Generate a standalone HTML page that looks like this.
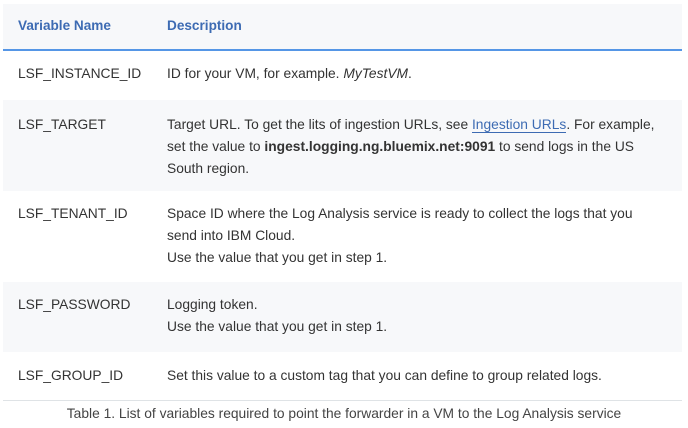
<!DOCTYPE html>
<html><head><style>
body{margin:0;width:688px;height:428px;background:#fff;font-family:"Liberation Sans",sans-serif;font-size:13.8px;color:#333;position:relative;overflow:hidden}
.bg{position:absolute;left:3px;width:679px}
.t{position:absolute;white-space:nowrap;line-height:22px}
.h{color:#3d6bb3;font-weight:bold;font-size:13.6px}
a{color:#3d6bb3;text-decoration:none;border-bottom:1px solid #3d6bb3}
</style></head><body>
<div class="bg" style="top:4px;height:45px;background:#f7f8fa"></div>
<div class="bg" style="top:49px;height:2px;background:#5596e6"></div>
<div class="bg" style="top:100px;height:91px;background:#f7f8fa"></div>
<div class="bg" style="top:282px;height:70px;background:#f7f8fa"></div>
<div class="bg" style="top:400px;height:1px;background:#dfe3e6"></div>

<div class="t h" style="left:18px;top:15px">Variable Name</div>
<div class="t h" style="left:167px;top:15px">Description</div>

<div class="t" style="left:18px;top:63px">LSF_INSTANCE_ID</div>
<div class="t" style="left:167px;top:63px">ID for your VM, for example. <i>MyTestVM</i>.</div>

<div class="t" style="left:18px;top:114px">LSF_TARGET</div>
<div class="t" style="left:167px;top:114px">Target URL. To get the lits of ingestion URLs, see <a>Ingestion URLs</a>. For example,<br>set the value to <b>ingest.logging.ng.bluemix.net:9091</b> to send logs in the US<br>South region.</div>

<div class="t" style="left:18px;top:203px">LSF_TENANT_ID</div>
<div class="t" style="left:167px;top:203px">Space ID where the Log Analysis service is ready to collect the logs that you<br>send into IBM Cloud.<br>Use the value that you get in step 1.</div>

<div class="t" style="left:18px;top:294px">LSF_PASSWORD</div>
<div class="t" style="left:167px;top:294px">Logging token.<br>Use the value that you get in step 1.</div>

<div class="t" style="left:18px;top:365px">LSF_GROUP_ID</div>
<div class="t" style="left:167px;top:365px">Set this value to a custom tag that you can define to group related logs.</div>

<div class="t" style="left:0;width:688px;text-align:center;top:403px;color:#444">Table 1. List of variables required to point the forwarder in a VM to the Log Analysis service</div>
</body></html>
